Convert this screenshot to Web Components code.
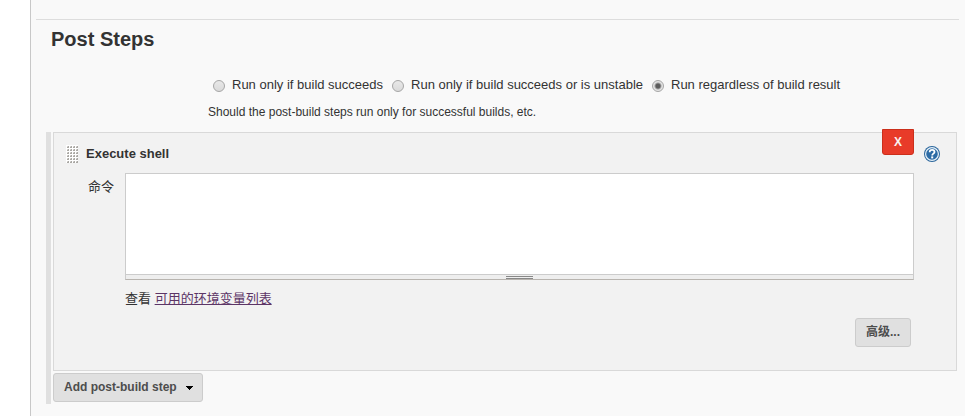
<!DOCTYPE html>
<html lang="en">
<head>
<meta charset="utf-8">
<title>Post Steps</title>
<style>
html, body { height: 100%; }
body { margin: 0; background: #f9f9f9; color: #333; font: 13px/18px "Liberation Sans", Arial, "Noto Sans CJK SC", sans-serif; }
</style>
</head>
<body>
<config-page>
  <config-section heading="Post Steps">
    <run-condition></run-condition>
    <step-list>
      <build-step heading="Execute shell">
        <shell-editor></shell-editor>
      </build-step>
      <step-button slot="add" menu>Add post-build step</step-button>
    </step-list>
  </config-section>
</config-page>
<script>
class Base extends HTMLElement {
  constructor() {
    super();
    this.attachShadow({ mode: "open" });
  }
  connectedCallback() {
    this.shadowRoot.innerHTML = "<style>*{box-sizing:border-box}" + this.constructor.css + "</style>" + this.view();
  }
}

customElements.define("config-page", class extends Base {
  static css = `
    :host { display: grid; grid-template-columns: 30px 1fr; min-height: 100%; }
    aside { background: #fff; }
    main { border-left: 1px solid #c8c8c8; padding: 19px 6px 0 5px; }`;
  view() { return `<aside></aside><main><slot></slot></main>`; }
});

customElements.define("config-section", class extends Base {
  static css = `
    :host { display: block; border-top: 1px solid #ddd; }
    h2 { margin: 0; padding: 7px 15px 0; font-size: 20px; line-height: 24px; }`;
  view() { return `<h2>${this.getAttribute("heading")}</h2><slot></slot>`; }
});

customElements.define("run-condition", class extends Base {
  static css = `
    :host { display: block; padding: 25px 0 0 172px; }
    fieldset { display: flex; gap: 9px; margin: 0; padding: 0 0 0 5px; border: 0; white-space: nowrap; }
    label { display: flex; gap: 7px; }
    input { appearance: none; flex: none; width: 12px; height: 12px; margin: 4px 0 0; border: 1px solid #a6a6a6; border-radius: 50%; background: linear-gradient(#e8e8e8, #dadada); }
    input:checked { background: radial-gradient(circle, #5c5c5c 0 2px, #e4e4e4 4px); }
    p { margin: 9px 0 0; font-size: 12px; line-height: 18px; }`;
  view() {
    return `<fieldset>
      <label><input type="radio" name="when">Run only if build succeeds</label>
      <label><input type="radio" name="when">Run only if build succeeds or is unstable</label>
      <label><input type="radio" name="when" checked>Run regardless of build result</label>
      </fieldset><p>Should the post-build steps run only for successful builds, etc.</p>`;
  }
});

customElements.define("step-list", class extends Base {
  static css = `
    :host { display: block; margin: 11px 2px 0 10px; padding: 0 0 2px 2px; border-left: 5px solid #e0e0e0; }
    div { padding-top: 2px; }`;
  view() { return `<slot></slot><div><slot name="add"></slot></div>`; }
});

customElements.define("step-button", class extends Base {
  static css = `
    :host { display: inline-block; vertical-align: top; }
    button { display: flex; align-items: center; gap: 8px; height: 29px; padding: 0 10px 2px; border: 1px solid #ccc; border-radius: 3px; background: #e0e0e0; color: #4d4d4d; font: bold 12px/18px "Liberation Sans", Arial, "Noto Sans CJK SC", sans-serif; white-space: nowrap; }
    svg { margin: 2px -2px 0 0; }`;
  view() {
    return `<button type="button"><span><slot></slot></span>${this.hasAttribute("menu") ? `<svg width="9" height="4" viewBox="0 0 9 4" shape-rendering="crispEdges"><path d="M1 0h7v1H1zM2 1h5v1H2zM3 2h3v1H3zM4 3h1v1H4z" fill="#000"/></svg>` : ""}</button>`;
  }
});

customElements.define("build-step", class extends Base {
  static css = `
    :host { display: block; position: relative; border: 1px solid #d9d9d9; background: #f2f2f2; padding: 11px 42px 23px 12px; }
    header { display: flex; align-items: center; gap: 8px; height: 20px; }
    h3 { margin: 0; font-size: 13px; line-height: 18px; }
    .close { position: absolute; top: -4px; right: 42px; width: 32px; height: 26px; padding: 0; border: 1px solid #cb2f1b; border-radius: 0 0 3px 3px; background: #e83b29; color: #f8f2f0; font: bold 12px/16px "Liberation Sans", Arial, sans-serif; }
    .help { position: absolute; top: 13px; right: 16px; width: 16px; height: 16px; line-height: 0; }`;
  view() {
    let dots = "";
    for (let y = 0; y < 6; y++)
      for (let x = 0; x < 4; x++)
        dots += `<path d="M${1 + x * 3} ${2 + y * 3}h1v-1h1v2h-2z" fill="#aaa8a4"/><rect x="${1 + x * 3}" y="${1 + y * 3}" width="1" height="1" fill="#d4d2cf"/>`;
    return `<header>
        <svg width="12" height="18" viewBox="0 0 12 18" shape-rendering="crispEdges"><rect width="12" height="18" fill="#fff"/>${dots}</svg>
        <h3>${this.getAttribute("heading")}</h3>
      </header>
      <button class="close" type="button" aria-label="Delete X">X</button>
      <a class="help" href="#help" aria-label="Help"><svg width="16" height="16" viewBox="0 0 16 16">
        <circle cx="8" cy="8" r="8" fill="#2b669c"/>
        <circle cx="8" cy="8" r="6.400" fill="#2c6ba5" stroke="#e8f1f8" stroke-width="1.200"/>
        <path d="M5.700 6.200C5.700 4.600 6.600 3.800 8.100 3.800S10.500 4.600 10.500 5.900C10.500 7.500 8.200 7.700 8.200 9.400" fill="none" stroke="#fff" stroke-width="1.800"/>
        <rect x="7.200" y="10.400" width="2" height="2" fill="#fff"/></svg></a>
      <slot></slot>`;
  }
});

customElements.define("shell-editor", class extends Base {
  static css = `
    :host { display: grid; grid-template-columns: 59px 1fr; margin-top: 9px; }
    label { padding: 5px 11px 0 0; text-align: right; }
    textarea { display: block; width: 100%; height: 102px; margin: 0; padding: 4px; border: 1px solid #ccc; border-radius: 0; resize: none; background: #fff; font: 13px/18px "Liberation Mono", monospace; }
    .grip { display: flex; justify-content: center; height: 5px; border: 1px solid #ccc; border-width: 0 1px 1px; border-bottom-color: #b8b4af; background: #eee; }
    .grip i { width: 27px; height: 3px; margin-top: 1px; border: 1px solid #888; border-width: 1px 0; }
    p { margin: 10px 0 0; }
    a { color: #5c3566; }
    footer { display: flex; justify-content: flex-end; padding: 10px 3px 0 0; }`;
  view() {
    return `<label for="cmd">命令</label>
      <div>
        <textarea id="cmd"></textarea>
        <div class="grip"><i></i></div>
        <p>查看 <a href="#env">可用的环境变量列表</a></p>
        <footer><step-button>高级...</step-button></footer>
      </div>`;
  }
});
</script>
</body>
</html>
